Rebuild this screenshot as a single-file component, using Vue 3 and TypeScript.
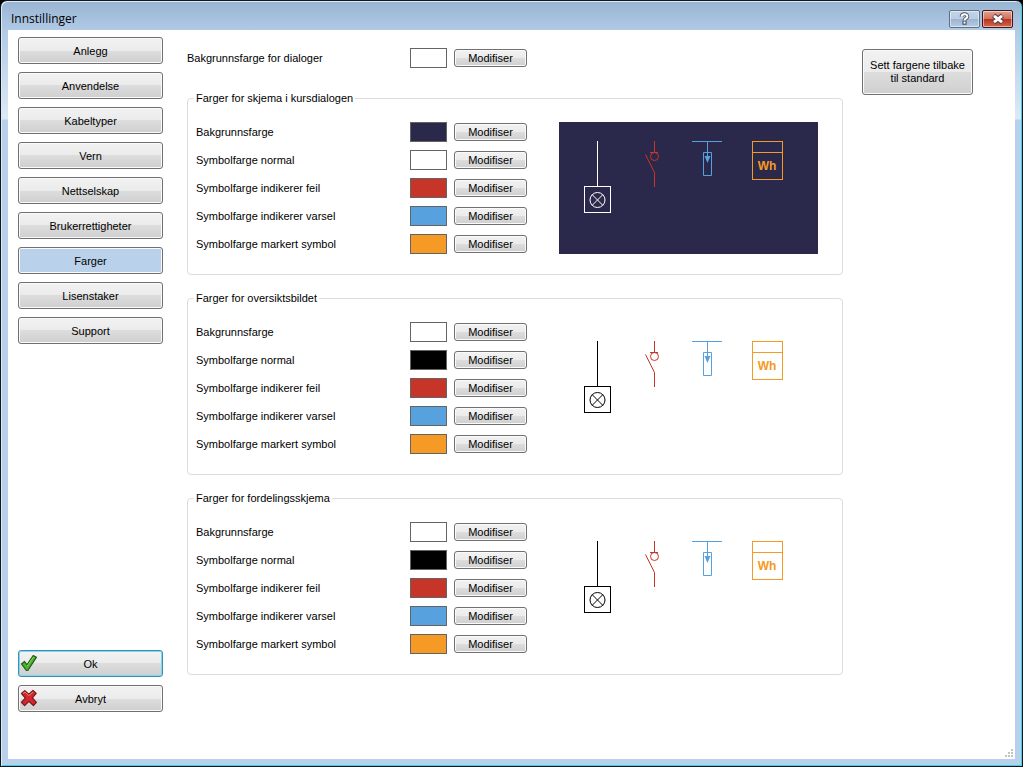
<script setup lang="ts">
import { ref } from 'vue'

interface ColorRow {
  label: string
  color: string
}

interface Group {
  id: string
  title: string
  rows: ColorRow[]
}

const sections: string[] = [
  'Anlegg',
  'Anvendelse',
  'Kabeltyper',
  'Vern',
  'Nettselskap',
  'Brukerrettigheter',
  'Farger',
  'Lisenstaker',
  'Support',
]
const active = ref('Farger')

const makeRows = (background: string, normal: string): ColorRow[] => [
  { label: 'Bakgrunnsfarge', color: background },
  { label: 'Symbolfarge normal', color: normal },
  { label: 'Symbolfarge indikerer feil', color: '#c63527' },
  { label: 'Symbolfarge indikerer varsel', color: '#57a2de' },
  { label: 'Symbolfarge markert symbol', color: '#f49a25' },
]

const groups = ref<Group[]>([
  { id: 'kurs', title: 'Farger for skjema i kursdialogen', rows: makeRows('#2b294b', '#ffffff') },
  { id: 'oversikt', title: 'Farger for oversiktsbildet', rows: makeRows('#ffffff', '#000000') },
  { id: 'fordeling', title: 'Farger for fordelingsskjema', rows: makeRows('#ffffff', '#000000') },
])
</script>

<template>
  <div class="window">
    <header class="titlebar">
      <h1 class="title">Innstillinger</h1>
      <button type="button" class="caption help" aria-label="Hjelp">
        <svg width="13" height="13" viewBox="0 0 13 13" aria-hidden="true">
          <path d="M3.6 4.8C3.6 1.4 9.4 1.4 9.4 4.4C9.4 6.6 6.5 6 6.5 8.4" fill="none" stroke="#4b5666" stroke-width="3.8" />
          <rect x="4.4" y="8.6" width="4.2" height="4.2" fill="#4b5666" />
          <path d="M3.6 4.8C3.6 1.4 9.4 1.4 9.4 4.4C9.4 6.6 6.5 6 6.5 8.4" fill="none" stroke="#fff" stroke-width="2" />
          <rect x="5.5" y="9.6" width="2" height="2" fill="#fff" />
        </svg>
      </button>
      <button type="button" class="caption close" aria-label="Lukk">
        <svg width="14" height="12" viewBox="0 0 14 12" aria-hidden="true">
          <path d="M2.6 2.5L11.4 9.5M11.4 2.5L2.6 9.5" fill="none" stroke="#5a3f46" stroke-width="4.8" />
          <path d="M3 2.8L11 9.2M11 2.8L3 9.2" fill="none" stroke="#fff" stroke-width="2.8" />
        </svg>
      </button>
    </header>

    <div class="client">
      <nav class="sidebar" aria-label="Innstillinger">
        <button
          v-for="s in sections"
          :key="s"
          type="button"
          class="btn side"
          :class="{ active: s === active }"
          @click="active = s"
        >{{ s }}</button>

        <button type="button" class="btn side ok">
          <svg class="mark" width="18" height="18" viewBox="0 0 18 18" aria-hidden="true">
            <path d="M1.5 10L4.5 7.5L7 10.8L13.2 1.5L16.5 3.2L7.8 16.5H6.4Z" fill="#4cb034" stroke="#1f5c14" stroke-width="1.2" stroke-linejoin="round" />
            <path d="M7 12.2L13.6 3" fill="none" stroke="#86d86c" stroke-width="1" />
          </svg>
          Ok
        </button>
        <button type="button" class="btn side">
          <svg class="mark" width="18" height="18" viewBox="0 0 18 18" aria-hidden="true">
            <path d="M1.5 4.5L4.8 1.6L8.8 5.2L13 1.4L16.2 4.4L12.4 8.8L16.4 13.4L13.4 16.5L8.9 12.4L4.6 16.6L1.4 13.4L5.4 9Z" fill="#d6262b" stroke="#74191b" stroke-width="1.2" stroke-linejoin="round" />
            <path d="M3 4.6L5 3L8.8 6.6L13 3" fill="none" stroke="#f08080" stroke-width="1" />
          </svg>
          Avbryt
        </button>
      </nav>

      <main class="main">
        <div class="row dialogs">
          <span id="dlg" class="label">Bakgrunnsfarge for dialoger</span>
          <span class="swatch" :style="{ backgroundColor: '#ffffff' }"></span>
          <button type="button" class="btn small" aria-describedby="dlg">Modifiser</button>
        </div>

        <fieldset v-for="g in groups" :key="g.id" class="group">
          <legend>{{ g.title }}</legend>
          <div class="body">
            <div class="rows">
              <div v-for="(r, i) in g.rows" :key="r.label" class="row">
                <span :id="`${g.id}-${i}`" class="label">{{ r.label }}</span>
                <span class="swatch" :style="{ backgroundColor: r.color }"></span>
                <button type="button" class="btn small" :aria-describedby="`${g.id}-${i}`">Modifiser</button>
              </div>
            </div>
            <div class="preview" :style="{ backgroundColor: g.rows[0].color }">
              <svg width="259" height="132" viewBox="0 0 259 132" fill="none" aria-hidden="true">
                <g :stroke="g.rows[1].color">
                  <path d="M38.5 19V65" />
                  <rect x="25.5" y="64.5" width="26" height="26" />
                  <circle cx="38.5" cy="78" r="7.5" />
                  <path d="M33.2 72.7L43.8 83.3M43.8 72.7L33.2 83.3" />
                </g>
                <g :stroke="g.rows[2].color">
                  <path d="M95.5 19V30.5M91 30.5H99M86.5 32.5L95.5 50.5V65" />
                  <circle cx="95.5" cy="34.5" r="4" />
                </g>
                <g :stroke="g.rows[3].color">
                  <path d="M133 19.5H163M148.5 19.5V36" />
                  <path d="M144.5 30.5H152.5V53.5H144.5Z" />
                  <path d="M145.5 34H151.5L148.5 41Z" :fill="g.rows[3].color" stroke="none" />
                </g>
                <g :stroke="g.rows[4].color">
                  <rect x="193.5" y="19.5" width="30" height="38" />
                  <path d="M193.5 30.5H223.5" />
                </g>
                <text x="208" y="48" class="wh" :fill="g.rows[4].color">Wh</text>
              </svg>
            </div>
          </div>
        </fieldset>
      </main>

      <button type="button" class="btn reset">Sett fargene tilbake<br />til standard</button>

      <svg class="grip" width="9" height="9" viewBox="0 0 9 9" aria-hidden="true">
        <path d="M6 0h2v2h-2zM3 3h2v2h-2zM6 3h2v2h-2zM0 6h2v2h-2zM3 6h2v2h-2zM6 6h2v2h-2z" fill="#c4c4c4" />
      </svg>
    </div>
  </div>
</template>

<style>
html {
  background: #000;
}
body {
  margin: 0;
}
</style>

<style scoped>
.window {
  box-sizing: border-box;
  min-height: 100vh;
  display: flex;
  flex-direction: column;
  padding: 0 6px 6px;
  border: 1px solid #101820;
  border-radius: 7px 7px 0 0;
  background: linear-gradient(#99b4d1 0, #b0cae6 29px, #dde9f6 118px, #b9d0ec 119px);
  box-shadow: inset 1px 1px 0 #dcebf7, inset -1px -1px 0 #3fd0e8;
  font-family: "Liberation Sans", Arial, sans-serif;
  font-size: 11px;
  line-height: 14px;
  color: #000;
}
.titlebar {
  height: 29px;
  display: flex;
  align-items: center;
  gap: 2px;
  padding: 0 3px 0 4px;
}
.title {
  flex: 1;
  margin: 6px 0 0;
  font: 400 12px/16px "Open Sans", "Noto Sans", sans-serif;
}
.caption {
  box-sizing: border-box;
  width: 31px;
  height: 18px;
  margin-top: 6px;
  padding: 0;
  display: flex;
  align-items: center;
  justify-content: center;
  border: 1px solid #5d7186;
  border-radius: 2px;
  box-shadow: inset 0 0 0 1px rgba(255, 255, 255, 0.5);
}
.help {
  background: linear-gradient(#c3d4e7 0, #b9cce1 50%, #9cb4d0 50%, #b5cbe3 100%);
}
.close {
  border-color: #43151a;
  background: linear-gradient(#e0a293 0, #d0705c 50%, #b8311c 50%, #d3674c 100%);
}
.client {
  position: relative;
  flex: 1;
  display: flex;
  align-items: flex-start;
  margin: 0 1px 1px;
  padding: 0 42px 0 10px;
  background: #fff;
}
.sidebar {
  box-sizing: border-box;
  align-self: stretch;
  width: 145px;
  display: flex;
  flex-direction: column;
  gap: 8px;
  padding: 7px 0 47px;
}
.btn {
  box-sizing: border-box;
  padding: 0;
  border: 1px solid #707070;
  border-radius: 3px;
  background: linear-gradient(#f2f2f2 0, #ebebeb 50%, #dddddd 50%, #cfcfcf 100%);
  box-shadow: inset 0 0 0 1px #fafafa;
  font: inherit;
  color: #000;
  text-align: center;
}
.side {
  position: relative;
  height: 27px;
  flex: none;
}
.active {
  background: #b9d1ea;
}
.ok {
  margin-top: auto;
  border-color: #3c8fb0;
  box-shadow: inset 0 0 0 1px #7fd8f2;
}
.mark {
  position: absolute;
  left: 1px;
  top: 3px;
}
.main {
  flex: 1;
  display: flex;
  flex-direction: column;
  gap: 16px;
  margin: 18px 19px 0 24px;
}
.row {
  display: flex;
  align-items: center;
}
.label {
  width: 214px;
}
.dialogs {
  margin-bottom: 7px;
}
.dialogs .label {
  width: 223px;
}
.swatch {
  box-sizing: border-box;
  width: 37px;
  height: 20px;
  border: 1px solid #646464;
}
.small {
  width: 73px;
  height: 18px;
  margin-left: 7px;
  line-height: 16px;
}
.group {
  min-width: 0;
  margin: 0;
  padding: 17px 24px 20px 8px;
  border: 1px solid #dcdcdc;
  border-radius: 4px;
}
.group legend {
  margin-left: -2px;
  padding: 0 2px;
}
.body {
  display: flex;
  gap: 32px;
}
.rows {
  display: flex;
  flex-direction: column;
  gap: 8px;
}
.preview {
  flex: 1;
}
.preview svg {
  display: block;
}
.wh {
  font: 700 12px "Liberation Sans", Arial, sans-serif;
  text-anchor: middle;
}
.reset {
  width: 111px;
  height: 46px;
  margin-top: 19px;
  line-height: 13px;
}
.grip {
  position: absolute;
  right: 1px;
  bottom: 1px;
}
</style>
